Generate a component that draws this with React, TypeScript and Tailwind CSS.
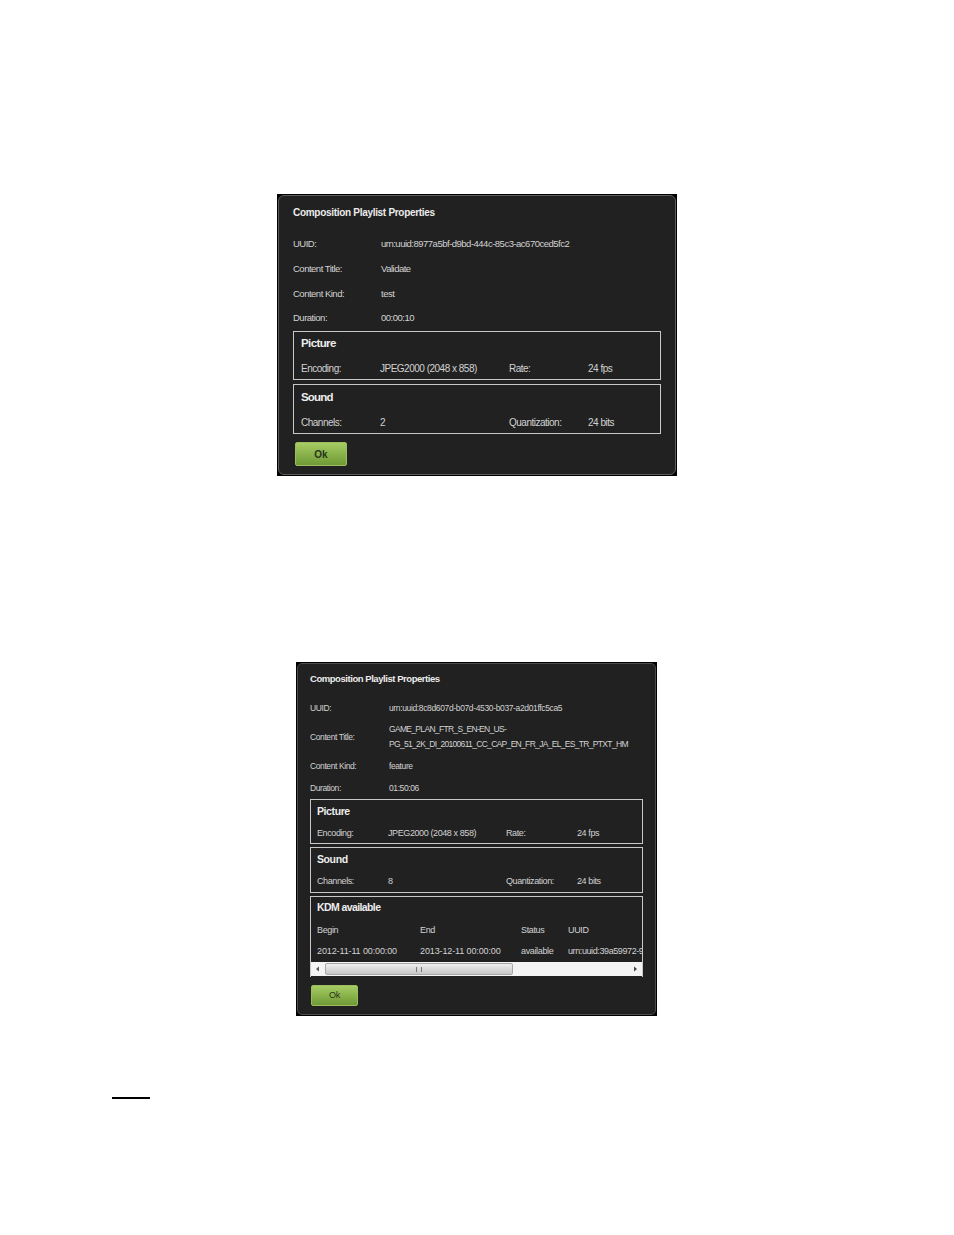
import type { ReactNode } from 'react';

function Row({ label, children, className }: { label: string; children: ReactNode; className: string }) {
  return (
    <div className={`flex items-center ${className}`}>
      <span className="shrink-0 w-[88px]">{label}</span>
      <div className="min-w-0">{children}</div>
    </div>
  );
}

function OkButton({ className }: { className: string }) {
  return (
    <button className={`flex items-center justify-center rounded-[2px] border border-[#9dbb5f] bg-gradient-to-b from-[#a6cc63] to-[#6f9a35] font-bold text-[#26351a] ${className}`}>
      Ok
    </button>
  );
}

function FirstDialog() {
  return (
    <div className="w-[400px] h-[282px] bg-black p-[1px]">
      <div className="h-full rounded-[6px] border border-[#5c5c5c] bg-[#212121] px-[14px] text-[10px] text-[#d2d2d2]">
        <h2 className="h-[35px] pt-[10px] text-[10px] leading-[14px] font-bold tracking-[-0.3px] text-[#ececec]">Composition Playlist Properties</h2>
        <div className="pt-[1px] text-[9.5px] tracking-[-0.5px]">
          <Row label="UUID:" className="h-[25px]">urn:uuid:8977a5bf-d9bd-444c-85c3-ac670ced5fc2</Row>
          <Row label="Content Title:" className="h-[25px]">Validate</Row>
          <Row label="Content Kind:" className="h-[24px]">test</Row>
          <Row label="Duration:" className="h-[25px]">00:00:10</Row>
        </div>
        <section className="h-[49px] border border-[#c8c8c8] px-[7px] tracking-[-0.5px]">
          <h3 className="h-[24px] pt-[3px] text-[11.5px] leading-[16px] font-bold tracking-[-0.6px] text-[#ececec]">Picture</h3>
          <div className="flex h-[23px] pt-[1px] items-center">
            <span className="w-[79px]">Encoding:</span>
            <span className="w-[129px]">JPEG2000 (2048 x 858)</span>
            <span className="w-[79px]">Rate:</span>
            <span>24 fps</span>
          </div>
        </section>
        <section className="h-[50px] mt-[4px] border border-[#c8c8c8] px-[7px] tracking-[-0.5px]">
          <h3 className="h-[25px] pt-[4px] text-[11.5px] leading-[16px] font-bold tracking-[-0.8px] text-[#ececec]">Sound</h3>
          <div className="flex h-[23px] pt-[1px] items-center">
            <span className="w-[79px]">Channels:</span>
            <span className="w-[129px]">2</span>
            <span className="w-[79px]">Quantization:</span>
            <span>24 bits</span>
          </div>
        </section>
        <OkButton className="ml-[2px] mt-[8px] w-[52px] h-[24px] text-[10px]" />
      </div>
    </div>
  );
}

function SecondDialog() {
  return (
    <div className="w-[361px] h-[354px] bg-black p-[1px]">
      <div className="h-full rounded-[5px] border border-[#4c4c4c] bg-[#212121] px-[12px] text-[8.5px] text-[#d2d2d2]">
        <h2 className="h-[33px] pt-[8px] text-[9.5px] leading-[14px] font-bold tracking-[-0.45px] text-[#ececec]">Composition Playlist Properties</h2>
        <div className="flex items-center h-[22px]">
          <span className="shrink-0 w-[79px] tracking-[-0.4px]">UUID:</span>
          <span className="tracking-[-0.36px]">urn:uuid:8c8d607d-b07d-4530-b037-a2d01ffc5ca5</span>
        </div>
        <div className="flex items-center h-[36px]">
          <span className="shrink-0 w-[79px] tracking-[-0.4px]">Content Title:</span>
          <div className="leading-[15px] tracking-[-0.68px] whitespace-nowrap">
            GAME_PLAN_FTR_S_EN-EN_US-
            <br />
            PG_51_2K_DI_20100611_CC_CAP_EN_FR_JA_EL_ES_TR_PTXT_HM
          </div>
        </div>
        <div className="flex items-center h-[22px] tracking-[-0.4px]">
          <span className="w-[79px]">Content Kind:</span>
          <span>feature</span>
        </div>
        <div className="flex items-center h-[22px] tracking-[-0.4px]">
          <span className="w-[79px]">Duration:</span>
          <span>01:50:06</span>
        </div>
        <section className="h-[45px] border border-[#c8c8c8] px-[6px] text-[9px] tracking-[-0.4px]">
          <h3 className="h-[23px] pt-[4px] text-[10.5px] leading-[15px] font-bold text-[#ececec]">Picture</h3>
          <div className="flex h-[18px] pt-[3px] items-center">
            <span className="w-[71px]">Encoding:</span>
            <span className="w-[118px]">JPEG2000 (2048 x 858)</span>
            <span className="w-[71px]">Rate:</span>
            <span>24 fps</span>
          </div>
        </section>
        <section className="h-[46px] mt-[3px] border border-[#c8c8c8] px-[6px] text-[9px] tracking-[-0.4px]">
          <h3 className="h-[24px] pt-[4px] text-[10.5px] leading-[15px] font-bold text-[#ececec]">Sound</h3>
          <div className="flex h-[18px] pt-[2px] items-center">
            <span className="w-[71px]">Channels:</span>
            <span className="w-[118px]">8</span>
            <span className="w-[71px]">Quantization:</span>
            <span>24 bits</span>
          </div>
        </section>
        <section className="h-[81px] mt-[3px] border border-[#c8c8c8] border-b-0 text-[9px] overflow-hidden">
          <h3 className="h-[24px] pt-[3px] px-[6px] text-[10.5px] leading-[15px] font-bold tracking-[-0.6px] text-[#ececec]">KDM available</h3>
          <div className="flex h-[20px] items-center pl-[6px] whitespace-nowrap tracking-[-0.35px]">
            <span className="w-[103px] shrink-0">Begin</span>
            <span className="w-[101px] shrink-0">End</span>
            <span className="w-[47px] shrink-0">Status</span>
            <span>UUID</span>
          </div>
          <div className="flex h-[21px] items-center pl-[6px] whitespace-nowrap tracking-[-0.12px]">
            <span className="w-[103px] shrink-0">2012-11-11 00:00:00</span>
            <span className="w-[101px] shrink-0">2013-12-11 00:00:00</span>
            <span className="w-[47px] shrink-0 tracking-[-0.35px]">available</span>
            <span className="tracking-[-0.4px]">urn:uuid:39a59972-9</span>
          </div>
          <div className="flex h-[14px] items-center bg-[#f4f4f4]">
            <svg width="14" height="14" viewBox="0 0 14 14" className="shrink-0">
              <path d="M8 4.5 L5 7 L8 9.5 Z" fill="#555" />
            </svg>
            <div className="flex h-[12px] w-[188px] items-center justify-center rounded-[2px] border border-[#a8a8a8] bg-gradient-to-b from-[#f0f0f0] to-[#c6c6c6]">
              <span className="h-[5px] w-[6px] border-x border-[#777] bg-[linear-gradient(90deg,transparent_40%,#777_40%,#777_60%,transparent_60%)]" />
            </div>
            <svg width="14" height="14" viewBox="0 0 14 14" className="ml-auto shrink-0">
              <path d="M6 4.5 L9 7 L6 9.5 Z" fill="#444" />
            </svg>
          </div>
        </section>
        <OkButton className="ml-[1px] mt-[8px] w-[47px] h-[21px] text-[9px] font-normal tracking-[-0.3px]" />
      </div>
    </div>
  );
}

export default function App() {
  return (
    <div className="w-[954px] h-[1235px] bg-white font-['Liberation_Sans',Arial,sans-serif] overflow-hidden">
      <div className="pt-[194px] pl-[277px]">
        <FirstDialog />
      </div>
      <div className="pt-[186px] pl-[296px]">
        <SecondDialog />
      </div>
      <div className="mt-[81px] ml-[112px] w-[38px] h-[2px] bg-black" />
    </div>
  );
}
